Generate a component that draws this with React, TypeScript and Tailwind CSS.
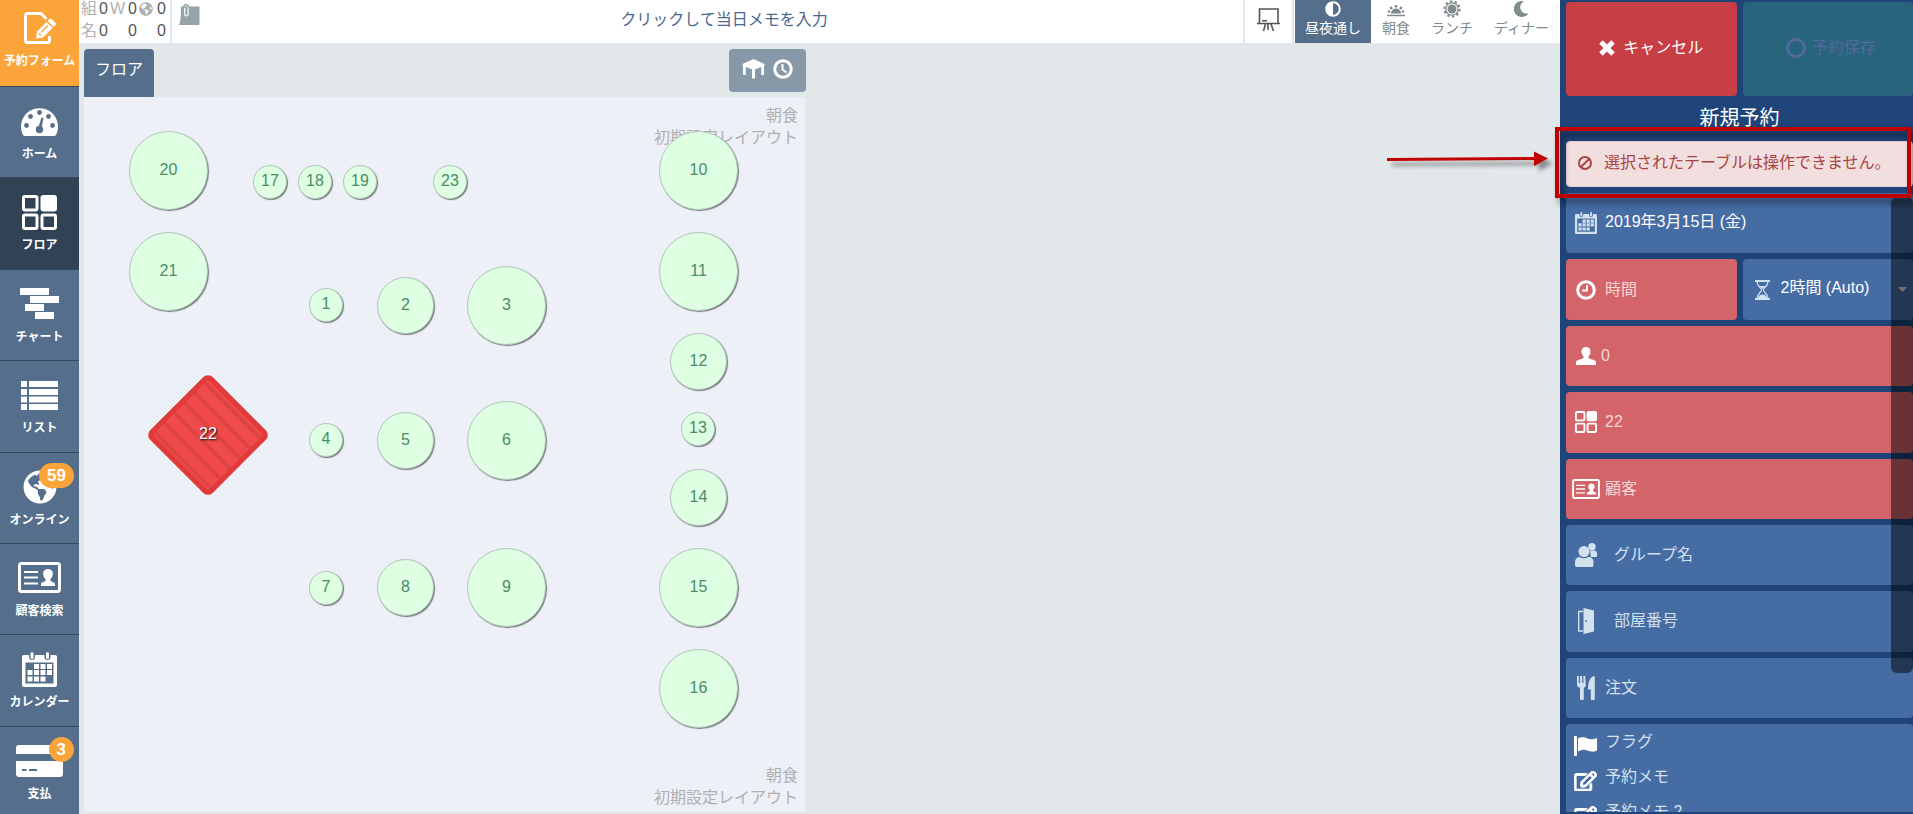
import React from 'react';
import { FaAdjust, FaGlobeAmericas, FaMoon, FaRegEdit } from 'react-icons/fa';

type Shape = { id: number; x: number; y: number; size: 'sm' | 'md' | 'lg' };

const SIZES = {
  sm: 'size-[34px]',
  md: 'size-[57px]',
  lg: 'size-[79px]',
};

const TABLES: Shape[] = [
  { id: 20, x: 45, y: 34, size: 'lg' },
  { id: 21, x: 45, y: 135, size: 'lg' },
  { id: 17, x: 169, y: 68, size: 'sm' },
  { id: 18, x: 214, y: 68, size: 'sm' },
  { id: 19, x: 259, y: 68, size: 'sm' },
  { id: 23, x: 349, y: 68, size: 'sm' },
  { id: 1, x: 225, y: 191, size: 'sm' },
  { id: 2, x: 293, y: 180, size: 'md' },
  { id: 3, x: 383, y: 169, size: 'lg' },
  { id: 4, x: 225, y: 326, size: 'sm' },
  { id: 5, x: 293, y: 315, size: 'md' },
  { id: 6, x: 383, y: 304, size: 'lg' },
  { id: 7, x: 225, y: 474, size: 'sm' },
  { id: 8, x: 293, y: 462, size: 'md' },
  { id: 9, x: 383, y: 451, size: 'lg' },
  { id: 10, x: 575, y: 34, size: 'lg' },
  { id: 11, x: 575, y: 135, size: 'lg' },
  { id: 12, x: 586, y: 236, size: 'md' },
  { id: 13, x: 597, y: 315, size: 'sm' },
  { id: 14, x: 586, y: 372, size: 'md' },
  { id: 15, x: 575, y: 451, size: 'lg' },
  { id: 16, x: 575, y: 552, size: 'lg' },
];

function FormIcon({ className }: { className?: string }) {
  return (
    <svg className={className} viewBox="0 0 32 32" fill="none">
      <path d="M25.500 24v4.500a2 2 0 0 1-2 2h-20a2 2 0 0 1-2-2v-25a2 2 0 0 1 2-2H17l5.500 5.500" stroke="currentColor" strokeWidth="3" />
      <path d="M12 26.500l1-7L22.500 10l6 6L19 25.500z" fill="currentColor" />
      <path d="M23.500 9l2-2a1.500 1.500 0 0 1 2 0l4 4a1.500 1.500 0 0 1 0 2l-2 2z" fill="currentColor" />
      <path d="M15 21.500l2 2M17 20.500l7-7" stroke="#faa43a" strokeWidth="1.300" />
    </svg>
  );
}

function GaugeIcon({ className }: { className?: string }) {
  return (
    <svg className={className} viewBox="0 0 37 29">
      <path d="M4 29a3 3 0 0 1-2-1A18.500 18.500 0 1 1 35 28a3 3 0 0 1-2 1z" fill="currentColor" />
      <g fill="#546e8c">
        <circle cx="5.500" cy="18.500" r="2.400" />
        <circle cx="9.500" cy="9.500" r="2.400" />
        <circle cx="18.500" cy="5.500" r="2.400" />
        <circle cx="27.500" cy="9.500" r="2.400" />
        <circle cx="31.500" cy="18.500" r="2.400" />
        <circle cx="18.500" cy="22.500" r="3.700" />
        <path d="M17.500 20l3-9.500 2 .500-2 10z" />
      </g>
    </svg>
  );
}

function SquaresIcon({ className }: { className?: string }) {
  return (
    <svg className={className} viewBox="0 0 35 35" fill="none" stroke="currentColor" strokeWidth="3">
      <rect x="1.500" y="1.500" width="13.500" height="13.500" rx="1.500" />
      <rect x="20" y="1.500" width="13.500" height="13.500" rx="1.500" fill="currentColor" />
      <rect x="1.500" y="20" width="13.500" height="13.500" rx="1.500" />
      <rect x="20" y="20" width="13.500" height="13.500" rx="1.500" />
    </svg>
  );
}

function ChartIcon({ className }: { className?: string }) {
  return (
    <svg className={className} viewBox="0 0 39 32" fill="currentColor">
      <rect width="29" height="7" />
      <rect x="10" y="8" width="29" height="7" />
      <rect x="5" y="16" width="19" height="7" />
      <rect x="15" y="24" width="19" height="7" />
    </svg>
  );
}

function ListIcon({ className }: { className?: string }) {
  return (
    <svg className={className} viewBox="0 0 37 29" fill="currentColor">
      <path d="M0 0h6v6H0zM8 0h29v6H8zM0 8h6v6H0zM8 8h29v6H8zM0 15.500h6v6H0zM8 15.500h29v6H8zM0 23h6v6H0zM8 23h29v6H8z" />
    </svg>
  );
}

function CardIcon({ className }: { className?: string }) {
  return (
    <svg className={className} viewBox="0 0 43 31" fill="none">
      <rect x="1.500" y="1.500" width="40" height="28" rx="2" stroke="currentColor" strokeWidth="3" />
      <path d="M6 10h14M6 15.500h14M6 21.500h14" stroke="currentColor" strokeWidth="2" />
      <path d="M23 24v-2c0-2 4-2 4.500-3.500v-1.500c-3.500-3-3.500-10 2.500-10s6 7 2.500 10v1.500c.500 1.500 4.500 1.500 4.500 3.500v2z" fill="currentColor" />
    </svg>
  );
}

function CalendarIcon({ className }: { className?: string }) {
  return (
    <svg className={className} viewBox="0 0 35 35" fill="currentColor">
      <path fillRule="evenodd" d="M2 3h5v2a3 3 0 0 0 6 0V3h9.500v2a3 3 0 0 0 6 0V3H33a2 2 0 0 1 2 2v28a2 2 0 0 1-2 2H2a2 2 0 0 1-2-2V5a2 2 0 0 1 2-2zm1.500 7.500V31.500h28v-21z" />
      <rect x="8.500" y="0" width="3" height="7" rx="1.500" />
      <rect x="24" y="0" width="3" height="7" rx="1.500" />
      <path d="M12 12h5v5h-5zM18.500 12h5v5h-5zM25 12h5v5h-5zM5.500 18h5v5h-5zM12 18h5v5h-5zM18.500 18h5v5h-5zM25 18h5v5h-5zM5.500 24.500h5v5h-5zM12 24.500h5v5h-5zM18.500 24.500h5v5h-5z" />
    </svg>
  );
}

function PaymentIcon({ className }: { className?: string }) {
  return (
    <svg className={className} viewBox="0 0 47 32">
      <path d="M3 0h41a3 3 0 0 1 3 3v6H0V3a3 3 0 0 1 3-3zM0 16h47v13a3 3 0 0 1-3 3H3a3 3 0 0 1-3-3z" fill="currentColor" />
      <path d="M6 25h4.500M13 25h8" stroke="#546e8c" strokeWidth="2" />
    </svg>
  );
}

function ClipIcon({ className }: { className?: string }) {
  return (
    <svg className={className} viewBox="0 0 22 24">
      <path d="M2 3h19.500v18.500a1 1 0 0 1-1 1H0c2-4 2-12 2-19.500z" fill="#95a5a6" />
      <path d="M5 3.500C5 .500 10 .500 10 3.500V11c0 2.500-4 2.500-4 0V5" fill="none" stroke="#95a5a6" strokeWidth="1.500" />
      <path d="M9.500 4v7.500c0 2-3.500 2-3.500 0V4.500" fill="none" stroke="#fff" strokeWidth="1.200" />
    </svg>
  );
}

function BoardIcon({ className }: { className?: string }) {
  return (
    <svg className={className} viewBox="0 0 23 24" fill="none" stroke="#555" strokeWidth="1.600">
      <path d="M2.500 15V1h18.500v14M0 15.500h23M5 12.800h5M8.500 16l-2 7M11 16v6M14 16l2.500 7" />
    </svg>
  );
}

function SunriseIcon({ className }: { className?: string }) {
  return (
    <svg className={className} viewBox="0 0 18 18">
      <path d="M4 13.500a5 5 0 0 1 10 0z" fill="currentColor" />
      <path d="M0 15.500h18" stroke="currentColor" strokeWidth="1.500" />
      <path d="M9 7.500V5M5 9L3.200 7M13 9l1.800-2M3 12l-2-.800M15 12l2-.800" stroke="currentColor" strokeWidth="2.400" />
    </svg>
  );
}

function SunIcon({ className }: { className?: string }) {
  return (
    <svg className={className} viewBox="0 0 18 18" fill="none" stroke="currentColor">
      <circle cx="9" cy="9" r="4.500" fill="currentColor" stroke="none" />
      <circle cx="9" cy="9" r="6.200" strokeWidth="1.200" />
      <circle cx="9" cy="9" r="7.600" strokeWidth="2.200" strokeDasharray="2.400 2.375" />
    </svg>
  );
}

function TableIcon({ className }: { className?: string }) {
  return (
    <svg className={className} viewBox="0 0 23 20" fill="currentColor">
      <path d="M11.500 0L22.500 5v1.500L11.500 11 .500 6.500V5z" />
      <path d="M1 6h2.800v10H1zM10 9h3v10.500h-3zM19.200 6H22v10h-2.800z" />
    </svg>
  );
}

function ClockIcon({ className }: { className?: string }) {
  return (
    <svg className={className} viewBox="0 0 20 20" fill="none" stroke="currentColor">
      <circle cx="10" cy="10" r="8.300" strokeWidth="3" />
      <path d="M9.500 5v5.500l4 3" strokeWidth="2" />
    </svg>
  );
}

function TimeIcon({ className }: { className?: string }) {
  return (
    <svg className={className} viewBox="0 0 20 20" fill="none" stroke="currentColor">
      <circle cx="10" cy="10" r="8.300" strokeWidth="3" />
      <path d="M11 5v5.500H6" strokeWidth="1.800" />
    </svg>
  );
}

function CrossIcon({ className }: { className?: string }) {
  return (
    <svg className={className} viewBox="0 0 16 16" stroke="currentColor" strokeWidth="5">
      <path d="M2 2l12 12M14 2L2 14" />
    </svg>
  );
}

function RingIcon({ className }: { className?: string }) {
  return (
    <svg className={className} viewBox="0 0 20 20" fill="none" stroke="currentColor">
      <circle cx="10" cy="10" r="8.500" strokeWidth="3" />
    </svg>
  );
}

function BanIcon({ className }: { className?: string }) {
  return (
    <svg className={className} viewBox="0 0 14 14" fill="none" stroke="currentColor" strokeWidth="2">
      <circle cx="7" cy="7" r="6" />
      <path d="M11 3l-8 8" />
    </svg>
  );
}

function HourglassIcon({ className }: { className?: string }) {
  return (
    <svg className={className} viewBox="0 0 15 20" fill="none" stroke="currentColor">
      <path d="M0 1h15M0 19h15" strokeWidth="1.800" />
      <path d="M2 1.500c0 5 4.500 6 4.500 8.500S2 13.500 2 18.500M13 1.500c0 5-4.500 6-4.500 8.500s4.500 3.500 4.500 8.500" strokeWidth="1.200" />
      <path d="M4.500 6h6l-3 3zM3 18c0-2 3-3.500 4.500-3.500S12 16 12 18z" fill="currentColor" stroke="none" />
    </svg>
  );
}

function UserIcon({ className }: { className?: string }) {
  return (
    <svg className={className} viewBox="0 0 20 18" fill="currentColor">
      <path d="M0 18v-3c0-2 5-2.500 7.500-4v-1.500C4.500 6.500 4.500 0 10 0s5.500 6.500 2.500 9.500V11c2.500 1.500 7.500 2 7.500 4v3z" />
    </svg>
  );
}

function GroupIcon({ className }: { className?: string }) {
  return (
    <svg className={className} viewBox="0 0 22 24" fill="currentColor">
      <circle cx="17" cy="3.700" r="3.700" />
      <path d="M15 8c5-1 7 0 7 2.500V13c0 .800-.500 1-1 1h-5z" />
      <circle cx="9" cy="8.500" r="5.500" />
      <path d="M0 19c0-3 2-5 4.500-5 3 1.600 6 1.600 9 0 3 0 5 2 5 5v3c0 1.500-1 2-2 2H2c-1 0-2-.500-2-2z" />
    </svg>
  );
}

function DoorIcon({ className }: { className?: string }) {
  return (
    <svg className={className} viewBox="0 0 16 26">
      <path d="M5 3.500H.700v19.500H5" fill="none" stroke="currentColor" strokeWidth="1.400" />
      <path d="M5.500 0L16 2.500v21L5.500 26z" fill="currentColor" />
      <circle cx="8" cy="13" r=".900" fill="#466ca4" />
    </svg>
  );
}

function CutleryIcon({ className }: { className?: string }) {
  return (
    <svg className={className} viewBox="0 0 18 24" fill="currentColor">
      <path d="M0 0h1.800v7H3V0h2.200v7h1.200V0h1.800l.600 9c0 2-1.500 2.500-2 3v10.500a1.500 1.500 0 0 1-3.800 0V12C2.500 11.500 0 11 0 9zM17.800 0v22.500a1.500 1.500 0 0 1-4 0V13.500H11C11 7 13 0 17.800 0z" />
    </svg>
  );
}

function FlagIcon({ className }: { className?: string }) {
  return (
    <svg className={className} viewBox="0 0 23 20" fill="currentColor">
      <rect width="3" height="20" rx="1" />
      <path d="M4 2.500c4-2 7-1 9.500 0s6 1 9.500-.500v12.500c-4 2-7 1-9.500 0s-6-1-9.500 1z" />
    </svg>
  );
}

const NAV = [
  { label: 'ホーム', icon: <GaugeIcon className="w-[37px] h-[29px]" /> },
  { label: 'フロア', icon: <SquaresIcon className="size-[35px]" />, active: true },
  { label: 'チャート', icon: <ChartIcon className="w-[39px] h-8" /> },
  { label: 'リスト', icon: <ListIcon className="w-[37px] h-[29px]" /> },
  { label: 'オンライン', icon: <FaGlobeAmericas className="size-[34px]" />, badge: 59 },
  { label: '顧客検索', icon: <CardIcon className="w-[43px] h-[31px]" /> },
  { label: 'カレンダー', icon: <CalendarIcon className="size-[35px]" /> },
  { label: '支払', icon: <PaymentIcon className="w-[47px] h-8" />, badge: 3 },
];

function Sidebar() {
  return (
    <nav className="w-[79px] shrink-0 overflow-hidden bg-[#546e8c] text-xs font-bold text-white">
      <button className="flex h-[87px] w-full flex-col items-center border-b border-[#34495e] bg-[#faa43a] pt-2">
        <span className="flex h-10 items-center">
          <FormIcon className="size-8" />
        </span>
        <span className="whitespace-nowrap leading-[26px]">予約フォーム</span>
      </button>
      <div className="grid h-[731px] auto-rows-fr">
        {NAV.map((item) => (
          <button
            key={item.label}
            className={`relative flex flex-col items-center border-b border-[#34495e] pt-3.5 ${item.active ? 'bg-[#324255]' : ''}`}
          >
            <span className="flex h-10 items-center">{item.icon}</span>
            <span className="whitespace-nowrap leading-[26px]">{item.label}</span>
            {item.badge && (
              <span className="absolute right-[5px] top-2.5 rounded-full bg-[#faa43a] px-2 text-[17px] leading-[25px]">
                {item.badge}
              </span>
            )}
          </button>
        ))}
      </div>
    </nav>
  );
}

const SESSIONS = [
  { label: '昼夜通し', icon: <FaAdjust className="size-4" />, active: true },
  { label: '朝食', icon: <SunriseIcon className="size-[18px]" /> },
  { label: 'ランチ', icon: <SunIcon className="size-[18px]" /> },
  { label: 'ディナー', icon: <FaMoon className="size-4" /> },
];

function TopBar() {
  return (
    <header className="flex h-[43px] shrink-0 bg-white">
      <div className="grid grid-cols-[18px_11px_18px_11px_18px_11px] content-start gap-y-1.5 border-r-2 border-[#e2e7ea] px-0.5 pt-px leading-4 text-[#555]">
        <span className="text-[#b0b0b0]">組</span>
        <span>0</span>
        <span className="text-[#b0b0b0]">W</span>
        <span>0</span>
        <span className="flex items-center text-[#b0b0b0]">
          <FaGlobeAmericas className="size-3.5" />
        </span>
        <span>0</span>
        <span className="text-[#b0b0b0]">名</span>
        <span>0</span>
        <span className="col-start-4">0</span>
        <span className="col-start-6">0</span>
      </div>
      <button className="flex w-[35px] items-start px-[7px] pt-[3px]" aria-label="添付メモ">
        <ClipIcon className="h-6 w-[22px]" />
      </button>
      <button className="flex-1 pb-1 pr-0.5 text-[#4a6891]">クリックして当日メモを入力</button>
      <button className="flex w-[51px] items-start justify-center border-x-2 border-[#e2e7ea] pt-2" aria-label="ボード">
        <BoardIcon className="h-6 w-[23px]" />
      </button>
      <div className="flex gap-px px-px text-sm">
        {SESSIONS.map((s) => (
          <button
            key={s.label}
            className={`flex flex-col items-center px-2.5 ${s.active ? 'bg-[#546e8c] text-white' : 'text-[#7f8c8d]'}`}
          >
            <span className="flex h-[18px] items-center">{s.icon}</span>
            <span className="whitespace-nowrap leading-5">{s.label}</span>
          </button>
        ))}
      </div>
    </header>
  );
}

function LayoutName() {
  return (
    <p className="text-right leading-[22px] text-[#b0b0b0]">
      朝食
      <br />
      初期設定レイアウト
    </p>
  );
}

function FloorPlan() {
  return (
    <main className="flex min-h-0 w-[727px] flex-1 flex-col pb-0.5 pl-[5px] pt-1.5">
      <div className="flex shrink-0 items-start justify-between">
        <button className="h-12 rounded-t bg-[#546e8c] px-[11px] pb-1.5 text-white">フロア</button>
        <button className="flex h-[43px] w-[77px] items-center justify-center gap-2 rounded bg-[#8799a9] pb-1 text-white" aria-label="テーブルと時間">
          <TableIcon className="h-5 w-[23px]" />
          <ClockIcon className="size-5" />
        </button>
      </div>
      <section className="relative mr-px flex flex-1 flex-col justify-between bg-[#edf0f6] px-[7px] pb-[3px] pt-2">
        <LayoutName />
        {TABLES.map((t) => (
          <button
            key={t.id}
            className={`absolute rounded-full border border-[#b0c8bb] bg-[#deffe2] pb-0.5 text-[#4a8c66] shadow-[1px_1px_1px_rgba(0,0,0,0.5)] ${SIZES[t.size]}`}
            style={{ left: t.x, top: t.y }}
          >
            {t.id}
          </button>
        ))}
        <button className="absolute left-16 top-[278px] flex size-[120px] items-center justify-center text-white" aria-label="22">
          <svg className="absolute size-full" viewBox="0 0 118 118">
            <g transform="rotate(45 59 59)">
              <rect x="18" y="18" width="82" height="82" rx="3" fill="#f04a4a" />
              <path d="M20 25h78M20 39h78M20 53h78M20 67h78M20 81h78M20 94h78" stroke="#dc4444" strokeWidth="3.500" />
              <rect x="18" y="18" width="82" height="82" rx="4" fill="none" stroke="#e03a3a" strokeWidth="5" />
            </g>
          </svg>
          <span className="relative pb-0.5 [text-shadow:1px_1px_2px_#000]">22</span>
        </button>
        <LayoutName />
      </section>
    </main>
  );
}

const FIELD = 'flex w-full min-w-0 items-center rounded pl-1.5 text-left';
const BLUE = 'bg-[#466ca4] text-[#d3e0ee]';
const RED = 'bg-[#d36469] text-[#f6d5d7]';

function FieldIcon({ children }: { children: React.ReactNode }) {
  return <span className="flex w-7 shrink-0 items-center justify-center">{children}</span>;
}

function ReservationPanel() {
  return (
    <aside className="relative flex w-[353px] shrink-0 flex-col bg-[#1f447a] pb-0.5 pl-1.5 pt-0.5">
      <div className="grid h-[94px] shrink-0 grid-cols-2 gap-1.5">
        <button className="flex items-center justify-center gap-2 rounded bg-[#c73e45] pb-0.5 text-white">
          <CrossIcon className="size-4" />
          キャンセル
        </button>
        <button disabled className="flex items-center justify-center gap-1.5 rounded bg-[#28647c] pb-0.5 pl-1.5 text-[#536b9b]">
          <RingIcon className="size-5" />
          予約保存
        </button>
      </div>
      <h2 className="mb-px shrink-0 text-center text-xl leading-[44px] text-white">新規予約</h2>

      <div className="relative shrink-0">
        <p role="alert" className="flex h-[46px] items-center gap-3 rounded border border-[#ebccd1] bg-[#f2dede] pb-0.5 pl-[11px] text-[#a94442]">
          <BanIcon className="size-3.5 shrink-0" />
          <span className="whitespace-nowrap">選択されたテーブルは操作できません。</span>
        </p>
        <div className="absolute -left-[11px] -top-3.5 z-20 h-[71px] w-[356px] border-4 border-[#c00000] drop-shadow-[4px_5px_3px_rgba(0,0,0,0.5)]" />
        <svg className="absolute -left-[179px] top-2.5 z-20 h-4 w-[161px] drop-shadow-[5px_5px_2px_rgba(0,0,0,0.4)]" viewBox="0 0 161 16">
          <path d="M0 7l147-1V.500L161 7.500 147 15V9L0 10z" fill="#c00000" />
        </svg>
      </div>

      <div className="my-1.5 grid h-[525px] shrink-0 auto-rows-fr gap-1.5">
        <button className={`${FIELD} ${BLUE}`}>
          <FieldIcon><CalendarIcon className="size-[22px]" /></FieldIcon>
          <span className="pb-0.5 pl-[5px] text-white">2019年3月15日 (金)</span>
        </button>
        <div className="grid grid-cols-2 gap-1.5">
          <button className={`${FIELD} ${RED}`}>
            <FieldIcon><TimeIcon className="size-5 text-white" /></FieldIcon>
            <span className="pl-[5px]">時間</span>
          </button>
          <label className={`${FIELD} ${BLUE} relative`}>
            <FieldIcon><HourglassIcon className="h-5 w-[15px]" /></FieldIcon>
            <select aria-label="利用時間" className="h-full flex-1 appearance-none pb-1 pl-1 text-white outline-none">
              <option>2時間 (Auto)</option>
            </select>
            <svg className="absolute right-1.5 h-[5px] w-[9px]" viewBox="0 0 9 5">
              <path d="M0 0h9L4.500 5z" fill="#f0e0d0" />
            </svg>
          </label>
        </div>
        <button className={`${FIELD} ${RED}`}>
          <FieldIcon><UserIcon className="h-[18px] w-5 text-white" /></FieldIcon>
          <span className="pl-px">0</span>
        </button>
        <button className={`${FIELD} ${RED}`}>
          <FieldIcon><SquaresIcon className="size-[22px] text-white" /></FieldIcon>
          <span className="pl-[5px]">22</span>
        </button>
        <button className={`${FIELD} ${RED}`}>
          <FieldIcon><CardIcon className="h-5 w-7 text-white" /></FieldIcon>
          <span className="pl-[5px]">顧客</span>
        </button>
        <label className={`${FIELD} ${BLUE}`}>
          <FieldIcon><GroupIcon className="h-6 w-[22px]" /></FieldIcon>
          <input aria-label="グループ名" placeholder="グループ名" className="h-full min-w-0 flex-1 pl-3.5 outline-none placeholder:text-[#d3e0ee]" />
        </label>
        <label className={`${FIELD} ${BLUE}`}>
          <FieldIcon><DoorIcon className="h-[26px] w-4" /></FieldIcon>
          <input aria-label="部屋番号" placeholder="部屋番号" className="h-full min-w-0 flex-1 pl-3.5 outline-none placeholder:text-[#d3e0ee]" />
        </label>
        <button className={`${FIELD} ${BLUE}`}>
          <FieldIcon><CutleryIcon className="h-6 w-[18px]" /></FieldIcon>
          <span className="pl-[5px]">注文</span>
        </button>
      </div>

      <div className={`min-h-0 flex-1 overflow-hidden rounded-t pl-2 ${BLUE}`}>
        <button className="flex h-[35px] w-full items-center gap-2">
          <FlagIcon className="mt-2 h-5 w-[23px] text-white" />
          フラグ
        </button>
        <button className="flex h-[35px] w-full items-center gap-2">
          <FaRegEdit className="mt-2 h-5 w-[23px] stroke-white stroke-[24px] text-white" />
          予約メモ
        </button>
        <button className="flex h-[35px] w-full items-center gap-2">
          <FaRegEdit className="mt-2 h-5 w-[23px] stroke-white stroke-[24px] text-white" />
          予約メモ 2
        </button>
      </div>

      <div className="absolute right-0 top-[197px] z-10 h-[476px] w-[22px] rounded-md bg-black/50" />
    </aside>
  );
}

export default function App() {
  return (
    <div className="flex h-screen overflow-hidden bg-[#e2e7ea] text-base [font-family:'Liberation_Sans','Noto_Sans_CJK_JP',sans-serif]">
      <Sidebar />
      <div className="flex min-w-0 flex-1 flex-col">
        <TopBar />
        <FloorPlan />
      </div>
      <ReservationPanel />
    </div>
  );
}
